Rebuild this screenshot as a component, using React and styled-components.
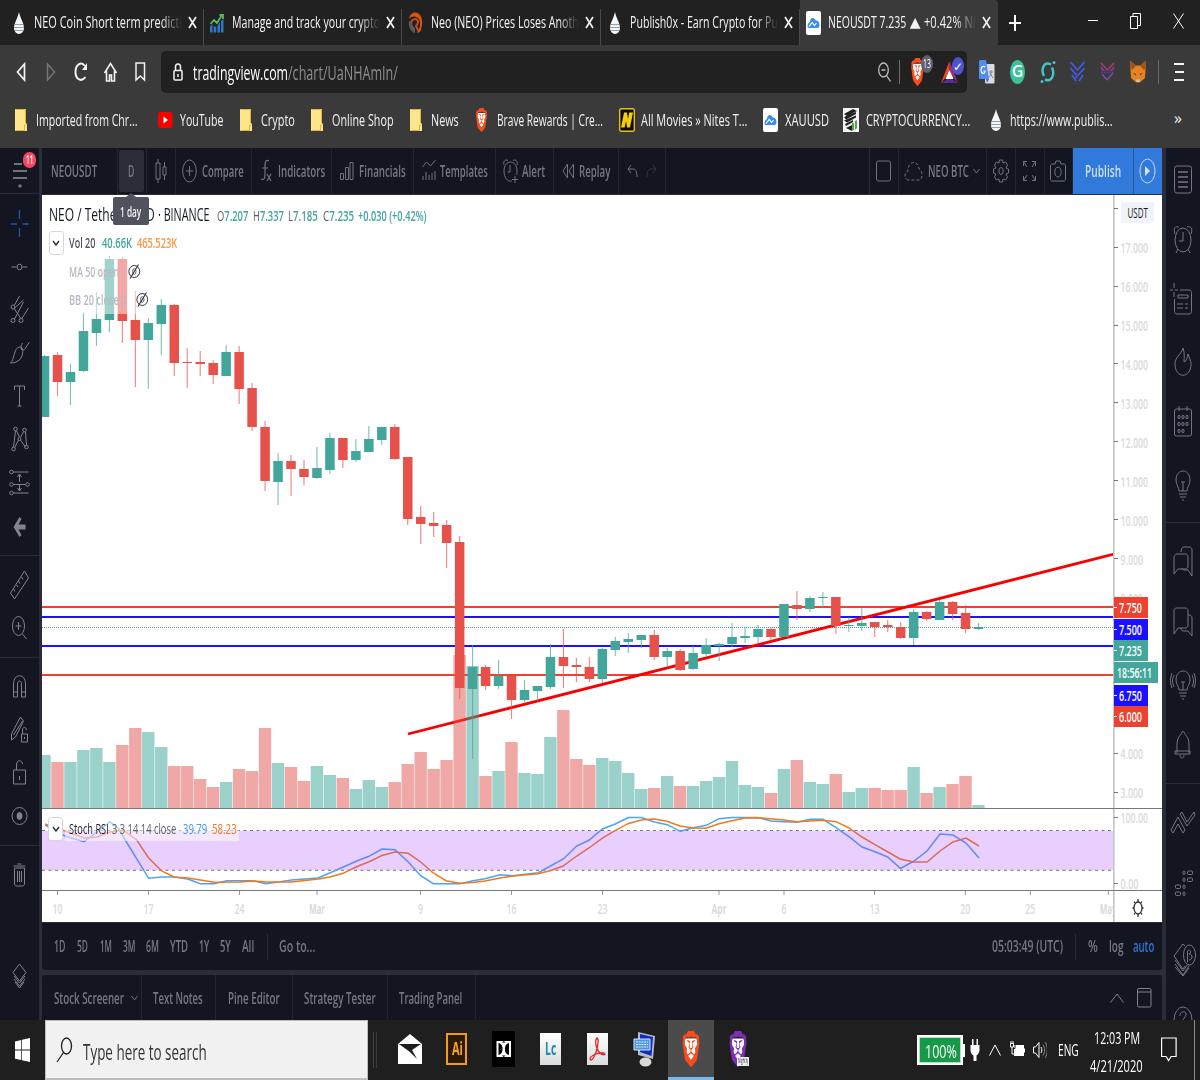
import React, { useLayoutEffect, useRef, useState } from "react";
import styled, { createGlobalStyle, css } from "styled-components";
import { SiBrave } from "react-icons/si";

const UP = "#42a69a";
const DOWN = "#e7514b";

// Text squeezed horizontally into an exact width
const Fit = ({ width, children, ...rest }) => {
  const ref = useRef(null);
  const [scale, setScale] = useState(1);

  useLayoutEffect(() => {
    setScale(width / ref.current.offsetWidth);
  }, [width, children]);

  return (
    <FitBox $width={width} {...rest}>
      <span ref={ref} style={{ transform: `scaleX(${scale})` }}>
        {children}
      </span>
    </FitBox>
  );
};

/* ---------- small icons ---------- */

const DropIcon = () => (
  <Svg width="12" height="24" viewBox="0 0 12 24">
    <path d="M6 1C7.5 8 11 12 11 17a5 6 0 0 1-10 0C1 12 4.500 8 6 1z" fill="#f4f6f8" />
    <path d="M2 13.500h8M1 16.500h10M1.500 19.500h9" stroke="#8fa0ad" strokeWidth="1" />
  </Svg>
);

const CloudIcon = ({ width = 15, height = 24 }) => (
  <Svg width={width} height={height} viewBox="0 0 15 24" preserveAspectRatio="none">
    <rect width="15" height="24" rx="2" fill="#fff" />
    <path d="M1.500 15.500C1.500 12 3.500 12 4 10.500 4.500 6 8.500 6 9.800 9.500c2.500 0 3.700 2 3.700 4.500 0 2-1 3-2 3H3.500c-1 0-2-.5-2-1.500z" fill="#3a8df0" />
    <path d="M3 15.500l3.200-4 2.300 3L10.500 12" stroke="#fff" strokeWidth="1.200" fill="none" />
  </Svg>
);

const BraveIcon = ({ width, height, color = "#fb4b1c" }) => (
  <BraveWrap $w={width} $h={height}>
    <Svg width={width} height={height} viewBox="0 0 24 24" preserveAspectRatio="none">
      <path d="M5 5h14l1 6-3 8-5 4-5-4-3-8z" fill="#fff" />
    </Svg>
    <SiBrave color={color} width={width} height={height} preserveAspectRatio="none" />
  </BraveWrap>
);

const FolderIcon = () => (
  <Svg width="12" height="22" viewBox="0 0 12 22">
    <path d="M0 0h11v14l1 1v7H0z" fill="#fce58b" />
    <path d="M.5 21.500h9v-5.500h2M.5.5h10V14" stroke="#dcb63c" fill="none" />
  </Svg>
);

const YouTubeIcon = () => (
  <Svg width="15" height="18" viewBox="0 0 15 18">
    <rect y="1" width="14.500" height="16" rx="2.500" fill="#f60000" />
    <path d="M5.500 5.500l4.500 3.500-4.500 3.500z" fill="#fff" />
  </Svg>
);

const ChartUpIcon = () => (
  <Svg width="14" height="20" viewBox="0 0 14 20">
    <path d="M0 19.500v-6l2.500-2.500v8.500zM3.700 19.500V13l2.500 1v5.500zM7.400 19.500V13L10 9v10.500zM11 19.500V8l2.500-2v13.500z" fill="#2e79c4" />
    <path d="M.5 11l3.500-4 3 3 5-8M9.500 2h3.500v4" stroke="#59b963" strokeWidth="1.800" fill="none" />
  </Svg>
);

const SwirlIcon = () => (
  <Svg width="15" height="24" viewBox="0 0 15 24">
    <path d="M1 8C2 2 7 0 11 3c4 3 4 12 1 18l-3 1c4-5 4-13 1-15C7 4.500 3 5 1 8z" fill="#dd5311" />
    <path d="M3 12c1-5 7-5 7-1 0 2-1 3-2 4l3 6" stroke="#c94d16" strokeWidth="2" fill="none" />
    <path d="M1 10c-1 6 2 11 6 12V17c-2-1-3-3-3-6z" fill="#5a5a5a" />
  </Svg>
);

const MoviesIcon = () => (
  <Svg width="16" height="24" viewBox="0 0 16 24">
    <rect x=".7" y=".7" width="14.600" height="22.600" rx="1.500" fill="#0c0a00" stroke="#e7c30c" strokeWidth="1.400" />
    <path d="M2 19.500L5 4.500h3l1 6.500 1.200-6.500H14L11 19.500H8L7 13l-1.300 6.500z" fill="#f3ce0f" />
  </Svg>
);

const PagesIcon = () => (
  <Svg width="16" height="24" viewBox="0 0 16 24">
    <rect width="16" height="24" fill="#f4f4f4" />
    <path d="M1 6l9-5 4 2-10 5zM1 9l12-5v2L3 11.500zM1 12.500l12-5v2L4 14.500zM2 16l8-4v2l-7 4z" fill="#202020" />
    <path d="M9 15v8l2-1v-7zM12 13v9l2-2v-8z" fill="#4ca83d" />
    <path d="M3 20l6-3v6z" fill="#202020" />
  </Svg>
);

const CloseIcon = () => (
  <Svg width="9" height="13" viewBox="0 0 9 13">
    <path d="M1 1l7 11M8 1L1 12" stroke="#f2f2f2" strokeWidth="1.700" />
  </Svg>
);

const EyeOffIcon = () => (
  <Svg width="13" height="17" viewBox="0 0 13 17" stroke="#2f3241" fill="none">
    <ellipse cx="6.300" cy="8.500" rx="5.400" ry="6" />
    <ellipse cx="6.300" cy="8.500" rx="1.700" ry="2.800" strokeWidth=".8" />
    <path d="M10.500 1.500L2 15.500" strokeWidth="1.100" />
  </Svg>
);

/* ---------- browser ---------- */

const tabs = [
  { icon: <DropIcon />, text: "NEO Coin Short term predicti" },
  { icon: <ChartUpIcon />, text: "Manage and track your crypto" },
  { icon: <SwirlIcon />, text: "Neo (NEO) Prices Loses Anoth" },
  { icon: <DropIcon />, text: "Publish0x - Earn Crypto for Pu" },
  { icon: <CloudIcon />, text: "NEOUSDT 7.235", change: "+0.42% NE", active: true },
];

const bookmarks = [
  { icon: <FolderIcon />, left: 15, box: 20.5, width: 101.5, text: "Imported from Chr..." },
  { icon: <YouTubeIcon />, left: 21, box: 22, width: 43.5, text: "YouTube" },
  { icon: <FolderIcon />, left: 16.5, box: 20.5, width: 34, text: "Crypto" },
  { icon: <FolderIcon />, left: 16.5, box: 20.5, width: 61.5, text: "Online Shop" },
  { icon: <FolderIcon />, left: 17, box: 21, width: 28, text: "News" },
  { icon: <BraveIcon width={13} height={24} />, left: 16, box: 21.5, width: 106, text: "Brave Rewards | Cre..." },
  { icon: <MoviesIcon />, left: 16, box: 22.5, width: 106.5, text: "All Movies » Nites T..." },
  { icon: <CloudIcon />, left: 15.5, box: 22, width: 44, text: "XAUUSD" },
  { icon: <PagesIcon />, left: 14, box: 23, width: 104, text: "CRYPTOCURRENCY..." },
  { icon: <DropIcon />, left: 19.5, box: 20.5, width: 102.5, text: "https://www.publis..." },
];

const Browser = () => (
  <>
    <TabStrip>
      {tabs.map((tab, i) => (
        <Tab key={i} $active={tab.active}>
          <TabIcon>{tab.icon}</TabIcon>
          <TabText>
            {tab.change ? (
              <>
                <Fit width={78.500}>{tab.text}</Fit>
                <Triangle>▲</Triangle>
                <Fit width={55}>{tab.change}</Fit>
              </>
            ) : (
              <Fit width={148}>{tab.text}</Fit>
            )}
          </TabText>
          <CloseIcon />
        </Tab>
      ))}
      <Cell $w={34}>
        <Svg width="12" height="18" viewBox="0 0 12 18">
          <path d="M6 1v16M0 9h12" stroke="#fff" strokeWidth="2" />
        </Svg>
      </Cell>
      <WindowButtons>
        <Svg width="10" height="16" viewBox="0 0 10 16">
          <path d="M0 7.500h10" stroke="#fff" />
        </Svg>
        <Svg width="11" height="16" viewBox="0 0 11 16" fill="none" stroke="#fff">
          <path d="M.5 3.500h7v12h-7zM3 3V.5h7.500v12H8" />
        </Svg>
        <Svg width="11" height="16" viewBox="0 0 11 16">
          <path d="M.5.5l10 15M10.500.5l-10 15" stroke="#fff" />
        </Svg>
      </WindowButtons>
    </TabStrip>
    <NavRow>
      <Cell $w={29}>
        <Svg width="10" height="20" viewBox="0 0 10 20">
          <path d="M8.500 2v16L1.500 10z" stroke="#f2f2f2" strokeWidth="1.700" fill="none" />
        </Svg>
      </Cell>
      <Cell $w={31}>
        <Svg width="10" height="20" viewBox="0 0 10 20">
          <path d="M1.500 2v16l7-8z" stroke="#757575" strokeWidth="1.500" fill="none" />
        </Svg>
      </Cell>
      <Cell $w={29}>
        <Svg width="14" height="20" viewBox="0 0 14 20" fill="none">
          <path d="M11 4C7-1 1.500 2.500 1.500 10s6 10.500 10 5" stroke="#f2f2f2" strokeWidth="2" />
          <path d="M13 1v7H8z" fill="#f2f2f2" />
        </Svg>
      </Cell>
      <Cell $w={30}>
        <Svg width="13" height="20" viewBox="0 0 13 20" fill="none" stroke="#f2f2f2" strokeWidth="1.600">
          <path d="M.5 11l6-9.500 6 9.500M2.500 9v10h3v-6h2v6h3V9" />
        </Svg>
      </Cell>
      <Cell $w={30}>
        <Svg width="11" height="20" viewBox="0 0 11 20" fill="none" stroke="#f2f2f2" strokeWidth="1.500">
          <path d="M1 1h8.500v17l-4.200-4L1 18z" />
        </Svg>
      </Cell>
      <UrlBar>
        <Svg width="10" height="18" viewBox="0 0 10 18" fill="none" stroke="#f2f2f2" strokeWidth="1.500">
          <rect x="1" y="7.500" width="8" height="9.500" rx="1" />
          <path d="M2.500 7V4c0-4 5-4 5 0v3M5 11v3" />
        </Svg>
        <Url>
          <Fit width={95}>tradingview.com</Fit>
          <Fit width={110} $color="#8e8e8e">
            /chart/UaNHAmIn/
          </Fit>
        </Url>
        <Svg width="13" height="20" viewBox="0 0 13 20" fill="none" stroke="#bcbcbc" strokeWidth="1.300">
          <ellipse cx="5.500" cy="8" rx="4.800" ry="7" />
          <path d="M3.500 8h4M8.500 13.500l4 6" />
        </Svg>
        <UrlDivider $left={8} />
        <Shield $left={10}>
          <BraveIcon width={15} height={28} />
          <CountBadge $bg="#5f6170">
            <Fit width={8}>13</Fit>
          </CountBadge>
        </Shield>
        <Shield $left={14.500}>
          <Svg width="17" height="24" viewBox="0 0 17 24">
            <path d="M8.500 1L0 23l8.500-10z" fill="#ee4a25" />
            <path d="M8.500 1L17 23 8.500 13z" fill="#992f78" />
            <path d="M0 23h17l-8.500-5z" fill="#5c2c96" />
            <path d="M8.500 10l4 9h-8z" fill="#fff" />
          </Svg>
          <CountBadge $bg="#4c54d2">✓</CountBadge>
        </Shield>
      </UrlBar>
      <Cell $w={31}>
        <Svg width="16" height="24" viewBox="0 0 16 24">
          <rect x="6" y="4" width="9.500" height="19.500" rx="1" fill="#dcdcdc" />
          <path d="M10 12h4M12 10v2c0 3-1 5-3 6M11 13l3 5" stroke="#7688a3" fill="none" />
          <path d="M1 0h6l3 19H1a1 1 0 0 1-1-1V1z" fill="#4e8bf5" />
          <path d="M7 19h3l-2 4z" fill="#3367d6" />
          <path d="M6 7C4.500 5.500 2 6.500 2 10s3.500 5 4.200 1H4.300" stroke="#fff" strokeWidth="1.200" fill="none" />
        </Svg>
      </Cell>
      <Cell $w={30}>
        <Grammarly>G</Grammarly>
      </Cell>
      <Cell $w={30}>
        <Svg width="16" height="24" viewBox="0 0 16 24" fill="none" stroke="#45c3c8" strokeWidth="2.500">
          <path d="M11 4.500C4 1 .5 9 4 16M5 19.500c7 3 10-5 7-12" />
          <circle cx="14" cy="2.500" r="1.500" fill="#45c3c8" stroke="none" />
          <circle cx="2" cy="21.500" r="1.500" fill="#45c3c8" stroke="none" />
        </Svg>
      </Cell>
      <Cell $w={30}>
        <Svg width="15" height="22" viewBox="0 0 15 22" fill="none" stroke="#3f5de8" strokeWidth="1.800">
          <path d="M.5 1l7 8 7-8M.5 7l6 7M14.500 7l-9 10M2 14l4 6M13 14l-4 6" />
        </Svg>
      </Cell>
      <Cell $w={30}>
        <Svg width="15" height="20" viewBox="0 0 15 20" fill="none" strokeWidth="1.500">
          <path d="M1 1l6.500 7L14 1" stroke="#a8397a" />
          <path d="M1 5l3 4M14 5l-3 4" stroke="#a8397a" />
          <path d="M1 8.500h13M1 10.500h13" stroke="#54407a" strokeDasharray="2 .6" />
          <path d="M2 12l5 6M13 11l-6 7" stroke="#7d4bb0" />
        </Svg>
      </Cell>
      <Cell $w={30}>
        <Svg width="16" height="24" viewBox="0 0 16 24">
          <path d="M.5 1l5 4.500h5l5-4.500v9L15 18l-4 3.500-1.500 1h-3l-1.500-1L1 18 .5 10z" fill="#e8821e" />
          <path d="M.5 1L6 6 2 10 .5 8zM15.500 1L10 6l4 4 1.500-2z" fill="#a2561f" />
          <path d="M3 13l3 1v1.500zM13 13l-3 1v1.500z" fill="#233447" />
          <path d="M6 19.500h4l-.5 2.500h-3z" fill="#d5c4b3" />
        </Svg>
      </Cell>
      <Cell $w={11}>
        <UrlDivider />
      </Cell>
      <Cell $w={31}>
        <Svg width="10" height="20" viewBox="0 0 10 20">
          <path d="M0 2h10M1 10h9M0 18h10" stroke="#f4f4f4" strokeWidth="2" />
        </Svg>
      </Cell>
    </NavRow>
    <BookmarkRow>
      {bookmarks.map((b) => (
        <Bookmark key={b.text} $left={b.left}>
          <BookmarkIcon $w={b.box}>{b.icon}</BookmarkIcon>
          <Fit width={b.width}>{b.text}</Fit>
        </Bookmark>
      ))}
      <More>»</More>
    </BookmarkRow>
  </>
);

/* ---------- drawing tools (left) ---------- */

const Tool = ({ h = 43.25, children, ...rest }) => (
  <ToolCell $h={h}>
    <Svg width="38" height="36" viewBox="-19.5 -18 38 36" fill="none" stroke="#81848f" {...rest}>
      {children}
    </Svg>
  </ToolCell>
);

const LeftBar = () => (
  <LeftColumn>
    <MenuCell>
      <Svg width="16" height="30" viewBox="0 0 16 30">
        <path d="M1 5h8M0 12h14M0 19h14" stroke="#70737e" strokeWidth="2.200" />
        <circle cx="7" cy="27" r="1.800" fill="#70737e" />
      </Svg>
      <Alerts>
        <Fit width={7.500}>11</Fit>
      </Alerts>
    </MenuCell>
    <ToolGroup>
      <Tool stroke="#2058a5" strokeWidth="1.300">
        <path d="M0-13v9M0 5v9M-8.500 1h6M3 1h6" />
      </Tool>
      <Tool>
        <path d="M-8 1h5M3 1h5" />
        <ellipse cy="1" rx="2.500" ry="2.800" />
      </Tool>
      <Tool>
        <path d="M-5-5L0-14M-6-1L4-10M-5 9L4-8M2 9l7-11M-5-1l6 9" />
        <circle cx="-6.500" cy="-3" r="2" />
        <circle cx="-6.500" cy="10.500" r="2" />
        <circle cx="1.500" cy="10.500" r="2" />
      </Tool>
      <Tool>
        <path d="M-9 10C-5 7-6-5 0-6c4 0 4 5 2 10-2 4-6 6-11 6zM2-3c-1-4 0-5 1-7M2-5c1 3 3 2 4 0l4-6" />
      </Tool>
      <Tool>
        <path d="M-5-6v-4H5v4M0-10V10M-2 10h4" />
      </Tool>
      <Tool>
        <path d="M-4-8l-2 16M-3-8L0-2M-5 9L-1 1M1-2l3-5M1 1l5 7M6-7l1 13" />
        <circle cx="-4" cy="-10" r="1.800" />
        <circle cx="5" cy="-9" r="1.800" />
        <circle cx="0" cy="0" r="1.500" />
        <circle cx="-6" cy="10" r="1.800" />
        <circle cx="7" cy="8" r="1.800" />
      </Tool>
      <Tool>
        <path d="M-6-11H9M-6 1.500H6M-6 10H9M0-8v7M0 2v6M-2-6l2-3 2 3M-2 5l2 3 2-3" />
        <circle cx="-8" cy="-11" r="1.800" />
        <circle cx="-8" cy="1.500" r="1.800" />
        <circle cx="8" cy="1.500" r="1.800" />
        <circle cx="-8" cy="10" r="1.800" />
      </Tool>
      <Tool stroke="none" fill="#81848f">
        <path d="M-6 1L0-9 2-7-1-1.500h7v5h-7L2 9 0 11z" />
      </Tool>
    </ToolGroup>
    <ToolGroup>
      <Tool>
        <path d="M-9 8L5-14l4 7-14 21zM2-8l1.500 2.500M-1-4l1.500 2.500M-3 0l1.500 2M-6 4l1.500 2.500" />
      </Tool>
      <Tool>
        <ellipse cx="-1" cy="-2" rx="6" ry="9.500" />
        <path d="M-4-2h6M-1-6v8M3 6l4 5" />
      </Tool>
    </ToolGroup>
    <ToolGroup>
      <Tool>
        <path d="M-6 10V-3c0-11 12-11 12 0v13H2V-3c0-4-4-4-4 0v13zM-6 5h4M2 5h4" />
      </Tool>
      <Tool>
        <path d="M-8 4l9-17 3 4-8 16-4 3zM-6 5L3-9M2 4h6v8H2zM3 4V0c0-4 4-3 4 0M5 7v2" />
      </Tool>
      <Tool>
        <path d="M-6-3H6v14H-6zM-3-3v-5c0-6 6-5 6-1M0 3v4" />
      </Tool>
      <Tool>
        <ellipse rx="7.500" ry="8.500" />
        <ellipse rx="2.500" ry="3.500" fill="#81848f" />
      </Tool>
    </ToolGroup>
    <ToolGroup $last>
      <Tool>
        <path d="M-5-7H5V9c0 1-1 2-2 2h-6c-1 0-2-1-2-2zM-6-9H6M-2-11h4M-2-4V7M0-4V7M2-4V7" />
      </Tool>
    </ToolGroup>
    <LayersCell>
      <Svg width="16" height="26" viewBox="0 0 16 26" fill="none" stroke="#81848f">
        <path d="M7.500 1L14 9.500 7.500 18 1 9.500zM2 13l5.500 7L13 13M2 16l5.500 7L13 16M3 19l4.500 6 4.500-6" />
      </Svg>
    </LayersCell>
  </LeftColumn>
);

/* ---------- widget bar (right) ---------- */

const Widget = ({ children }) => (
  <WidgetCell>
    <Svg width="34" height="36" viewBox="-17 -18 34 36" fill="none" stroke="#747783">
      {children}
    </Svg>
  </WidgetCell>
);

const RightBar = () => (
  <RightColumn>
    <WidgetGroup>
      <Widget>
        <rect x="-8.500" y="-13" width="17" height="27" rx="2.500" />
        <path d="M-5-7H5M-5-2H5M-5 3H5M-5 8H5" strokeWidth="1.300" />
      </Widget>
      <Widget>
        <ellipse cy="0" rx="8" ry="12" />
        <path d="M0-8v9h-4M-8-6c-2-6 0-8 4-7M8-6c2-6 0-8-4-7M-5 9l-2 4M5 9l2 4" />
      </Widget>
      <Widget>
        <path d="M-3-11h9c1.500 0 2.500 1 2.500 2.500v19c0 1.500-1 2.500-2.500 2.500H-6c-1.500 0-2.500-1-2.500-2.500V-2M-9-18v5M-9-9v5M-13-11h3M-8-11h3" />
        <path d="M-5-6H5v3H-5zM-6 3H0M2 3h3M-6 7H0M2 7h3" />
      </Widget>
      <Widget>
        <path d="M0-14c-2 7-8 9-8 16C-8 17 8 17 8 2 8-2 6-4 5-8 4-4 4-1 1 0 1-5 2-8 0-14z" />
      </Widget>
      <Widget>
        <rect x="-8.500" y="-14" width="17" height="27" rx="2" />
        <path d="M-4-17v5M4-17v5" />
        {[-4, 0, 4].map((x) =>
          [-6, 1, 8].map((y) =>
            x === 4 && y === 8 ? null : <ellipse key={`${x}/${y}`} cx={x} cy={y} rx="1.100" ry="1.800" />
          )
        )}
      </Widget>
      <Widget>
        <path d="M-4 7C-4 3-7 1-7-4c0-12 14-12 14 0 0 5-3 7-3 11zM-4 10h8M-3 13h6M-1 16h2M0 7v-9M-2-2h4" />
      </Widget>
    </WidgetGroup>
    <WidgetGroup>
      <Widget>
        <path d="M-9 12V-4c0-2 1-4 3-4H2c2 0 3 1 3 3V4c0 2-1 3-3 3h-7zM-2-10c0-3 1-5 3-5h5c2 0 3 1 3 3v26l-4-6H2c-2 0-3-1-3-2" />
      </Widget>
      <Widget>
        <path d="M-9 11V-12c0-2 1-3 3-3H2c2 0 3 1 3 3V2c0 2-1 3-3 3h-7zM5-8h1c2 0 3 1 3 3v18l-4-5H1c-2 0-3-1-3-3" />
      </Widget>
      <Widget>
        <path d="M-4 6C-4 2-7 1-7-4c0-12 14-12 14 0 0 5-3 6-3 10zM-4 9h8M-3 12h6M-1 15h2M0 6v-8M-2-2h4M-9-9c-2 5-2 7 0 12M9-9c2 5 2 7 0 12M-11-11c-2 6-2 9 0 15M11-11c2 6 2 9 0 15" />
      </Widget>
      <Widget>
        <path d="M-6 8V0c0-9 4-9 5-13C0-14 0-14 1-13c1 4 5 4 5 13v8M-8 6H7v3H-8zM-3 10c0 4 4 4 4 0" />
      </Widget>
    </WidgetGroup>
    <WidgetGroup $last>
      <Widget>
        <path d="M-12 7L-5-6 2 7 0 10-5 1l-5 9zM-3-9l2-2L4-1 11-11l1 3L4 3z" />
      </Widget>
      <Widget>
        {[
          [1, -11],
          [7, -11],
          [1, -4],
          [7, -4],
          [-5, 3],
          [1, 3],
          [-5, 10],
          [1, 10],
        ].map(([x, y]) => (
          <rect
            key={`${x}/${y}`}
            x={x === 1 ? x - 1 : x - 2.5}
            y={y - 2}
            width={x === 1 ? 2 : 5}
            height="3.500"
            rx="1"
          />
        ))}
      </Widget>
      <BetaSpace />
      <Widget>
        <path d="M2-13l-2-2-9 12L0 10l2-3M-8 1l8 11 5-7M-8 5l8 11 6-9M-8 8l8 9 6-8" />
        <ellipse cx="6.500" cy="-4" rx="6" ry="10" />
        <path d="M4.500 3V-7c0-3 4-2 3 1L6-5c4 0 4 6 0 6" />
      </Widget>
      <Widget>
        <ellipse rx="9" ry="13" />
        <path d="M-3-4c0-6 7-5 6-1-1 3-3 3-3 6" />
      </Widget>
    </WidgetGroup>
  </RightColumn>
);

/* ---------- chart ---------- */

// direction, high, body top, body bottom, low, volume top
const candles = [
  ["g", 355, 356, 417, 417, 755],
  ["r", 352, 355, 382, 396, 762],
  ["g", 364, 372, 382, 405, 762],
  ["g", 312, 331, 371, 372, 750],
  ["g", 292, 319, 333, 346, 748],
  ["g", 256, 259, 320, 332, 762],
  ["r", 257, 259, 321, 343, 745],
  ["r", 291, 320, 340, 387, 728],
  ["g", 318, 323, 340, 389, 732],
  ["g", 299, 305, 324, 355, 747],
  ["r", 304, 305, 363, 376, 766],
  ["r", 348, 362, 363, 388, 766],
  ["r", 351, 362, 364, 376, 779],
  ["r", 360, 363, 375, 384, 787],
  ["g", 345, 352, 376, 376, 782],
  ["r", 346, 352, 389, 404, 769],
  ["r", 383, 388, 427, 431, 771],
  ["r", 421, 427, 481, 491, 728],
  ["g", 453, 461, 482, 505, 763],
  ["r", 455, 461, 469, 496, 767],
  ["r", 460, 469, 477, 485, 781],
  ["g", 447, 468, 478, 479, 766],
  ["g", 433, 438, 470, 474, 775],
  ["r", 438, 438, 460, 468, 778],
  ["g", 439, 451, 460, 462, 789],
  ["g", 426, 439, 452, 452, 780],
  ["g", 427, 427, 440, 445, 787],
  ["r", 424, 427, 459, 460, 782],
  ["r", 457, 457, 519, 525, 764],
  ["r", 506, 517, 524, 544, 752],
  ["r", 512, 523, 526, 537, 769],
  ["r", 520, 525, 543, 568, 760],
  ["r", 536, 542, 688, 699, 655],
  ["g", 645, 667, 689, 759, 666],
  ["r", 665, 667, 686, 690, 776],
  ["g", 660, 676, 686, 689, 771],
  ["r", 676, 676, 700, 719, 742],
  ["g", 680, 690, 700, 702, 773],
  ["g", 686, 686, 691, 701, 774],
  ["g", 644, 657, 687, 689, 737],
  ["r", 629, 657, 666, 688, 710],
  ["r", 658, 665, 667, 682, 759],
  ["r", 657, 667, 679, 682, 765],
  ["g", 648, 649, 679, 683, 758],
  ["g", 637, 641, 650, 656, 761],
  ["g", 633, 639, 642, 653, 773],
  ["g", 635, 635, 640, 648, 789],
  ["r", 630, 635, 657, 660, 788],
  ["g", 648, 651, 657, 667, 776],
  ["r", 649, 651, 670, 671, 786],
  ["g", 646, 653, 669, 670, 786],
  ["g", 638, 645, 654, 656, 781],
  ["g", 643, 644, 646, 661, 777],
  ["g", 623, 637, 644, 647, 761],
  ["g", 627, 636, 638, 643, 785],
  ["g", 625, 629, 637, 643, 787],
  ["r", 627, 629, 637, 640, 793],
  ["g", 604, 604, 637, 637, 769],
  ["r", 591, 605, 609, 620, 760],
  ["g", 596, 598, 609, 612, 782],
  ["g", 592, 597, 598, 607, 784],
  ["r", 597, 597, 626, 634, 774],
  ["g", 617, 625, 626, 632, 792],
  ["g", 608, 623, 626, 631, 788],
  ["r", 622, 622, 627, 637, 788],
  ["r", 620, 625, 627, 632, 790],
  ["r", 622, 627, 638, 639, 790],
  ["g", 609, 612, 638, 645, 767],
  ["r", 611, 612, 619, 621, 793],
  ["g", 600, 602, 620, 620, 787],
  ["r", 601, 602, 614, 620, 784],
  ["r", 605, 613, 629, 633, 776],
  ["g", 623, 627, 629, 630, 805],
];

const stochK =
  "45,825 65,836 84,841.7 97,832 110,822 119,829 124,838 148.7,878.3 161.7,877 174,877 187.7,879 200.4,883.7 214,883.7 226.7,880.7 253,880.7 265.7,883.7 278.5,882 291.7,880 318,878 336.7,870 356.7,861 369,856.3 382,849 395,849.7 408.3,862 420.7,875.7 433.3,883.7 460,883.7 473,880.7 485,878.7 500,874.7 513,875.7 538.3,872.7 563.3,859 576.7,846 589.3,840 602.3,829 615.3,824 628.3,817.6 641.7,817.6 654.3,822 667.3,824.7 680.3,831.3 693.3,827.7 706.3,825.3 719,818.7 732,817.6 758,817.6 771,821 784,821.7 797,822.3 810,819.3 823,819.3 836,827.7 849,836.7 862,847 875,851.7 887.7,857 900.5,868.5 914,861 927,851 940,834 953,835 966,843 979,858";
const stochD =
  "45,824 65,831 84,838 97,837 110,832 123,830 136.7,840 148.7,858 161.7,871 174,877 187.7,878 200.4,880 214,882.3 240,882 253,881 266,882 291.7,882 305,880.5 318,879 330,877 343,873.3 356,867 369,861.7 382,855.5 395,852 408.3,853.3 420.7,862 433.3,873 446,880.7 460,883.3 473,882.5 485,881 500,878 513,876 538,873.7 551,870.5 563,866 576.7,856 589,848 602,838.3 615,830.7 628,823.7 641,820 654,819 667,821.3 680,826 693,828 706,828.3 719,823.7 732,820.7 745,818 758,817.7 784,820 797,821.7 823,820.3 836,821.7 849,828 862,837 875,844.7 888,852 900,859 914,862 927,862 940,851 953,842 966,838 979,846";

const timeLabels = [
  [57.5, "10", 10],
  [148.5, "17", 10],
  [239.5, "24", 10],
  [317, "Mar", 16],
  [420.5, "9", 5],
  [511.5, "16", 10],
  [602.5, "23", 10],
  [719, "Apr", 15],
  [784, "6", 5],
  [874.5, "13", 10],
  [965.3, "20", 10],
  [1030.3, "25", 10],
  [1108.3, "May", 17],
];

const priceTags = [
  [597, "7.750", "#ee4130"],
  [619, "7.500", "#1b10ff"],
  [640, "7.235", UP],
  [685, "6.750", "#1b10ff"],
  [706, "6.000", "#ee4130"],
];

// levels 5 to 7 sit under the price tags
const priceLevels = [18, 17, 16, 15, 14, 13, 12, 11, 10, 9, 8, 4, 3];

const candleX = (i) => 44.5 + i * 12.972;

const AxisText = ({ x, y, w, children, ...rest }) => (
  <text x={x} y={y} textLength={w} lengthAdjust="spacingAndGlyphs" fill="#dadadc" {...rest}>
    {children}
  </text>
);

const Chart = () => (
  <ChartSvg width="1120" height="727" viewBox="42 195 1120 727">
    <defs>
      <clipPath id="pane">
        <rect x="42" y="195" width="1072" height="727" />
      </clipPath>
    </defs>
    <g clipPath="url(#pane)">
      {[
        [607, "#ee4130"],
        [617, "#1b10ff"],
        [646, "#1b10ff"],
        [675, "#ee4130"],
      ].map(([y, color]) => (
        <rect key={y} x="42" y={y - 1} width="1072" height="2" fill={color} />
      ))}
      <path d="M42 627.500H1114" stroke="#4a968e" strokeDasharray="1 1" />
      <path d="M408 734L1114 554" stroke="#f90000" strokeWidth="2.800" />
      {candles.map(([dir, , , , , top], i) => (
        <rect
          key={i}
          x={candleX(i) - 6.2}
          y={top}
          width="12.400"
          height={808 - top}
          fill={dir === "g" ? "#35a597" : "#e1524d"}
          opacity="0.5"
        />
      ))}
      {candles.map(([dir, high, top, bottom, low], i) => {
        const x = candleX(i);
        const color = dir === "g" ? UP : DOWN;
        return (
          <g key={i} fill={color}>
            <rect x={x - 0.5} y={high} width="1.100" height={low - high} opacity="0.7" />
            <rect x={x - 4.7} y={top} width="9.500" height={bottom - top} />
          </g>
        );
      })}
      <path d="M42 830.500H1114M42 870.300H1114" stroke="#77707f" strokeDasharray="3 3.500" />
      <polyline points={stochK} fill="none" stroke="#4aa3f7" strokeWidth="1.500" />
      <polyline points={stochD} fill="none" stroke="#f07a1c" strokeWidth="1.500" />
      <rect x="42" y="831" width="1072" height="39" fill="#a33ff7" opacity="0.25" />
      {timeLabels.map(([x, label, w]) => (
        <AxisText
          key={label}
          x={x - w / 2}
          y="914"
          w={w}
          fontWeight={label.length > 2 ? 700 : 600}
        >
          {label}
        </AxisText>
      ))}
    </g>
    <rect x="1113" y="195" width="1.600" height="727" fill="#c4c4c4" />
    <path d="M42 808.500H1162M42 890.500H1162" stroke="#777" />
    {timeLabels.map(([x, label]) => (
      <path key={label} d={`M${x} 891v4`} stroke="#999" />
    ))}
    {priceLevels.map((price) => {
      const y = 208.6 + (18 - price) * 38.97;
      return (
        <g key={price}>
          <path d={`M1114 ${Math.round(y) - 0.5}h4`} stroke="#777" />
          {price < 18 && (
            <AxisText x="1120.500" y={y + 5.3} w={price > 9 ? 27.500 : 22.500}>
              {`${price}.000`}
            </AxisText>
          )}
        </g>
      );
    })}
    <path d="M1114 817.500h4M1114 883.500h4" stroke="#777" />
    <AxisText x="1120.500" y="823" w={27.500}>
      100.00
    </AxisText>
    <AxisText x="1120.500" y="889" w={18}>
      0.00
    </AxisText>
    {priceTags.map(([y, label, color]) => (
      <g key={label}>
        <rect x="1114" y={y} width="34" height="21" fill={color} />
        <path d={`M1114 ${y + 10.5}h3`} stroke="#fff" />
        <AxisText x="1119" y={y + 16} w={23} fill="#fff">
          {label}
        </AxisText>
      </g>
    ))}
    <rect x="1114" y="662" width="44" height="21" fill={UP} />
    <AxisText x="1117" y="678" w={35} fill="#fff">
      18:56:11
    </AxisText>
    <rect x="1121" y="202" width="33" height="21" rx="2" fill="#f0f3fa" />
    <AxisText x="1127.500" y="218" w={20.500} fill="#131722" fontWeight={400}>
      USDT
    </AxisText>
    <g fill="none" stroke="#2a2e39" strokeWidth="1.300">
      <ellipse cx="1138" cy="908" rx="4" ry="6" />
      <path d="M1138 899v3M1138 914v3M1132.500 908h1.500M1142 908h1.500M1134 901.500l1 1.500M1142 901.500l-1 1.500M1134 914.500l1-1.500M1142 914.500l-1-1.500" />
    </g>
  </ChartSvg>
);

const ChevronBox = () => (
  <Chevron>
    <Svg width="8" height="6" viewBox="0 0 8 6">
      <path d="M1 1l3 4 3-4" stroke="#2a2e39" strokeWidth="1.400" fill="none" />
    </Svg>
  </Chevron>
);

const Legend = () => (
  <LegendBox>
    <LegendTitle>
      <Fit width={106}>NEO / TetherUS · D</Fit>
      <Value $left={3}>
        <Fit width={51.500}>· BINANCE</Fit>
      </Value>
      <Ohlc>
        <Fit width={31}>
          O<b>7.207</b>
        </Fit>
        <Fit width={31}>
          H<b>7.337</b>
        </Fit>
        <Fit width={30}>
          L<b>7.185</b>
        </Fit>
        <Fit width={31}>
          C<b>7.235</b>
        </Fit>
        <Fit width={68.500}>
          <b>+0.030 (+0.42%)</b>
        </Fit>
      </Ohlc>
    </LegendTitle>
    <LegendRow $w={130}>
      <ChevronBox />
      <Fit width={26.500}>Vol 20</Fit>
      <Value $left={6.500} $color={UP}>
        <Fit width={30}>40.66K</Fit>
      </Value>
      <Value $left={4.500} $color="#f8993f">
        <Fit width={40}>465.523K</Fit>
      </Value>
    </LegendRow>
    <LegendRow $hidden $w={103}>
      <Fit width={50}>MA 50 open</Fit>
      <EyeOffIcon />
    </LegendRow>
    <LegendRow $hidden $w={103}>
      <Fit width={57.500}>BB 20 close 2</Fit>
      <EyeOffIcon />
    </LegendRow>
  </LegendBox>
);

const StochLegend = () => (
  <StochBox>
    <ChevronBox />
    <StochText>
      <Value $color="#1d1f29">
        <Fit width={40}>Stoch RSI</Fit>
      </Value>
      <Value $left={3} $color="#5d606b">
        <Fit width={64.500}>3 3 14 14 close</Fit>
      </Value>
      <Value $left={7} $color="#3c9af5">
        <Fit width={24}>39.79</Fit>
      </Value>
      <Value $left={4.500} $color="#f5781c">
        <Fit width={24.500}>58.23</Fit>
      </Value>
    </StochText>
  </StochBox>
);

/* ---------- trading toolbar ---------- */

const TopBar = () => (
  <TopRow>
    <ToolbarCell $w={75.500} $start={9}>
      <Fit width={46.500}>NEOUSDT</Fit>
    </ToolbarCell>
    <ToolbarCell $w={29}>
      <IntervalButton>
        <Fit width={6.500}>D</Fit>
        <Tooltip>
          <Fit width={21.500}>1 day</Fit>
        </Tooltip>
      </IntervalButton>
    </ToolbarCell>
    <ToolbarCell $w={29}>
      <Svg width="12" height="24" viewBox="0 0 12 24" fill="none" stroke="#70737e">
        <path d="M1 4h4v16H1zM3 0v4M3 20v4M8 8h3v8H8zM9.500 3v5M9.500 16v5" />
      </Svg>
    </ToolbarCell>
    <ToolbarCell $w={76} $start={6.500}>
      <Svg width="15" height="24" viewBox="0 0 15 24" fill="none" stroke="#70737e">
        <ellipse cx="7.500" cy="12" rx="6.800" ry="11" />
        <path d="M4 12h7M7.500 7v10" />
      </Svg>
      <Fit width={42}>Compare</Fit>
    </ToolbarCell>
    <ToolbarCell $w={80.500} $start={9.500}>
      <Svg width="12" height="24" viewBox="0 0 12 24" fill="none" stroke="#70737e" strokeWidth="1.200">
        <path d="M8 2C5 0 4 3 4 6v10c0 5-2 5-4 4M1 9h6M6 15l4 7M10 15l-4 7" />
      </Svg>
      <Fit width={47}>Indicators</Fit>
    </ToolbarCell>
    <ToolbarCell $w={81.500} $start={8}>
      <Svg width="14" height="20" viewBox="0 0 14 20" fill="none" stroke="#70737e">
        <path d="M.5 12.500h3v6h-3zM5.500 6.500h3v12h-3zM10 1.500h3v17h-3z" />
      </Svg>
      <Fit width={47}>Financials</Fit>
    </ToolbarCell>
    <ToolbarCell $w={82} $start={8}>
      <Svg width="14" height="22" viewBox="0 0 14 22" fill="none" stroke="#70737e">
        <path d="M.5 7l4-5 4 4 5-6M1 20v-4M4 20v-8M7 20v-5M10 20v-7M13 20v-9" />
      </Svg>
      <Fit width={48}>Templates</Fit>
    </ToolbarCell>
    <ToolbarCell $w={58} $start={7}>
      <Svg width="15" height="25" viewBox="0 0 15 25" fill="none" stroke="#70737e">
        <path d="M9 22C4 23 1 18 1 12 1 0 14 0 14 12c0 2 0 3-.5 4M7 6v7H4.500M1 6C0 2 2 0 5 1.500M14 6c1-4-1-6-4-4.500M12 17v7M9 20.500h6" />
      </Svg>
      <Fit width={23.500}>Alert</Fit>
    </ToolbarCell>
    <ToolbarCell $w={65.500} $start={8.500}>
      <Svg width="12" height="16" viewBox="0 0 12 16" fill="none" stroke="#70737e">
        <path d="M5.500 1v14L1 8zM11.500 1v14L7 8z" />
      </Svg>
      <Fit width={31.500}>Replay</Fit>
    </ToolbarCell>
    <ToolbarCell $w={47}>
      <Svg width="11" height="14" viewBox="0 0 11 14" fill="none" stroke="#70737e">
        <path d="M4 1L1 5l3 4M1 5h5c3 0 4 3 4 8" />
      </Svg>
      <Svg width="11" height="14" viewBox="0 0 11 14" fill="none" stroke="#333643">
        <path d="M7 1l3 4-3 4M10 5H5c-3 0-4 3-4 8" />
      </Svg>
    </ToolbarCell>
    <Spacer $line />
    <ToolbarCell $w={29}>
      <Svg width="15" height="22" viewBox="0 0 15 22" fill="none" stroke="#70737e">
        <rect x=".5" y="1" width="14" height="20" rx="2" />
      </Svg>
    </ToolbarCell>
    <ToolbarCell $w={88}>
      <Svg width="19" height="22" viewBox="0 0 19 22" fill="none" stroke="#70737e">
        <path d="M4 20C0 20 0 12 4 11 4 0 14 0 15 9c4 1 4 11 0 11z" strokeDasharray="3 2" />
      </Svg>
      <Fit width={41}>NEO BTC</Fit>
      <Svg width="7" height="6" viewBox="0 0 7 6">
        <path d="M.5 1l3 4 3-4" stroke="#70737e" fill="none" />
      </Svg>
    </ToolbarCell>
    <ToolbarCell $w={29}>
      <Svg width="16" height="24" viewBox="0 0 16 24" fill="none" stroke="#70737e">
        <path d="M6.500 1h3l.5 3 2.500-1 2 3-1.500 3 2.500 1v4l-2.500 1 1.500 3-2 3-2.500-1-.5 3h-3L6 20l-2.500 1-2-3L3 15 .5 14v-4L3 9 1.500 6l2-3L6 4z" />
        <ellipse cx="8" cy="12" rx="2.200" ry="3.500" />
      </Svg>
    </ToolbarCell>
    <ToolbarCell $w={29}>
      <Svg width="13" height="20" viewBox="0 0 13 20" fill="none" stroke="#70737e">
        <path d="M.5 5V.5H4M.5.5L4 6M12.500 5V.5H9M12.500.5L9 6M.5 15v4.500H4M.5 19.500L4 14M12.500 15v4.500H9M12.500 19.500L9 14" />
      </Svg>
    </ToolbarCell>
    <ToolbarCell $w={28}>
      <Svg width="16" height="22" viewBox="0 0 16 22" fill="none" stroke="#70737e">
        <path d="M2 4h3l1-3h4l1 3h3c1 0 1.500 1 1.500 2v13c0 1-.5 2-1.500 2H2c-1 0-1.500-1-1.500-2V6c0-1 .5-2 1.500-2z" />
        <ellipse cx="8" cy="12" rx="3.200" ry="5" />
      </Svg>
    </ToolbarCell>
    <Publish>
      <Fit width={36}>Publish</Fit>
    </Publish>
    <Play>
      <Svg width="17" height="26" viewBox="0 0 17 26">
        <ellipse cx="8.500" cy="13" rx="7.500" ry="12" fill="none" stroke="#c7dbf5" />
        <path d="M6 8l5 5-5 5z" fill="#d4e3f7" />
      </Svg>
    </Play>
  </TopRow>
);

const ranges = [
  [12, 11.5, "1D"],
  [11, 11, "5D"],
  [12, 12, "1M"],
  [11, 12.5, "3M"],
  [10.5, 13, "6M"],
  [11, 18, "YTD"],
  [11, 10.5, "1Y"],
  [11, 11, "5Y"],
  [11, 12.5, "All"],
];

const RangeBar = () => (
  <RangeRow>
    {ranges.map(([left, width, label]) => (
      <Value key={label} $left={left}>
        <Fit width={width}>{label}</Fit>
      </Value>
    ))}
    <RangeDivider $left={12} />
    <Value $left={11.500}>
      <Fit width={36.500}>Go to...</Fit>
    </Value>
    <Spacer />
    <Fit width={71}>05:03:49 (UTC)</Fit>
    <RangeDivider $left={12} />
    <Value $left={12}>
      <Fit width={10}>%</Fit>
    </Value>
    <Value $left={10.500}>
      <Fit width={14.500}>log</Fit>
    </Value>
    <Value $left={9.500} $right={8} $color="#2f74d8">
      <Fit width={21.500}>auto</Fit>
    </Value>
  </RangeRow>
);

const panels = [
  [99.5, 70, "Stock Screener"],
  [74.5, 50, "Text Notes"],
  [76.5, 52, "Pine Editor"],
  [95, 71.5, "Strategy Tester"],
  [88, 63.5, "Trading Panel"],
];

const PanelBar = () => (
  <PanelRow>
    {panels.map(([w, width, label], i) => (
      <PanelTab key={label} $w={w}>
        <Fit width={width}>{label}</Fit>
        {i === 0 && (
          <Svg width="7" height="6" viewBox="0 0 7 6">
            <path d="M.5 1l3 4 3-4" stroke="#70737e" fill="none" />
          </Svg>
        )}
      </PanelTab>
    ))}
    <Spacer />
    <PanelButtons>
      <Svg width="14" height="10" viewBox="0 0 14 10">
        <path d="M.5 9.500L7 1l6.500 8.500" stroke="#81848f" fill="none" />
      </Svg>
      <Svg width="15" height="20" viewBox="0 0 15 20" fill="none" stroke="#81848f">
        <rect x=".5" y=".5" width="13.500" height="18.500" rx="1.500" />
        <path d="M1 4h13" />
      </Svg>
    </PanelButtons>
  </PanelRow>
);

/* ---------- taskbar ---------- */

const TaskBar = () => (
  <TaskRow>
    <Cell $w={45}>
      <Svg width="15" height="24" viewBox="0 0 15 24" fill="#fff">
        <path d="M0 3.500l6.300-1.500v9.500H0zM7 1.800L15 0v11.500H7zM0 12.500h6.300V22L0 20.700zM7 12.500h8V24l-8-1.800z" />
      </Svg>
    </Cell>
    <SearchBox>
      <Svg width="17" height="26" viewBox="0 0 17 26" fill="none" stroke="#222" strokeWidth="1.300">
        <ellipse cx="10.500" cy="9" rx="5" ry="8" />
        <path d="M7.500 15.500L1 25" />
      </Svg>
      <Fit width={123.500}>Type here to search</Fit>
    </SearchBox>
    <TaskDivider />
    <TaskIcon>
      <Svg width="24" height="30" viewBox="0 0 24 30">
        <path d="M0 10L12 0l12 10v20H0z" fill="#fff" />
        <path d="M1 10h22l-9 6 5 9-7-7z" fill="#1c1c1c" />
      </Svg>
    </TaskIcon>
    <TaskIcon>
      <Illustrator>
        <Fit width={11}>Ai</Fit>
      </Illustrator>
    </TaskIcon>
    <TaskIcon>
      <Svg width="23" height="36" viewBox="0 0 23 36">
        <rect width="23" height="36" fill="#000" />
        <path d="M4.500 10h14.500v16H4.500z" fill="#fff" />
        <path d="M6.500 12c5.500.5 5.500 11.500 0 12zM17 12c-5.500.5-5.500 11.500 0 12z" fill="#000" />
        <path d="M11.750 10l-2 1.500h4zM11.750 26l-2-1.500h4z" fill="#000" />
      </Svg>
    </TaskIcon>
    <TaskIcon>
      <Paper>
        <Fit width={11}>Lc</Fit>
      </Paper>
    </TaskIcon>
    <TaskIcon>
      <Paper>
        <Svg width="17" height="26" viewBox="0 0 17 26" fill="none" stroke="#e0262b" strokeWidth="1.300">
          <path d="M1 23c0-3 8-7 14-6 3 2-2 3-5-1C6 11 6 4 8 2c2 0 1 9-1 14-2 6-5 10-6 7z" />
        </Svg>
      </Paper>
    </TaskIcon>
    <TaskIcon>
      <Svg width="23" height="36" viewBox="0 0 23 36">
        <path d="M5 1l17 4-2 23L5 24z" fill="#b9bcc0" />
        <path d="M7 3l13 3-1.500 19L7 21z" fill="#0c2bc5" />
        <path d="M1 8h16v11H1z" fill="#4e96dd" stroke="#dbe7f4" />
        <path d="M3 11h12M3 13.500h12M3 16h12" stroke="#e8f2fc" strokeDasharray="2 .7" />
        <ellipse cx="12.500" cy="31" rx="6" ry="4.500" fill="#d8d8d8" />
      </Svg>
    </TaskIcon>
    <TaskIcon $active>
      <BraveIcon width={20} height={36} />
    </TaskIcon>
    <TaskIcon>
      <BraveIcon width={20} height={36} color="#7b2fb9" />
      <Nightly>
        <Fit width={10}>Nightly</Fit>
      </Nightly>
    </TaskIcon>
    <Spacer />
    <Battery>
      <Fit width={32}>100%</Fit>
    </Battery>
    <Cell $w={19}>
      <Svg width="10" height="24" viewBox="0 0 10 24" fill="#fff">
        <path d="M2 1h1.500v6h3V1H8v6h1.500v5c0 3-2 5-3 5.500V23h-3v-5.500C2 17 .5 15 .5 12V7H2z" />
      </Svg>
    </Cell>
    <Cell $w={20}>
      <Svg width="12" height="12" viewBox="0 0 12 12">
        <path d="M.5 11.500L6 1l5.500 10.500" stroke="#fff" fill="none" />
      </Svg>
    </Cell>
    <Cell $w={25}>
      <Svg width="15" height="18" viewBox="0 0 15 18">
        <path d="M4 4h10v11H4z" fill="#fff" />
        <path d="M5 3.500v4H3v3" stroke="#1f1f1f" fill="none" />
        <path d="M.5 2.500v3.500h3V2.500zM1 0v3M3 0v3M2 6v7h2M14.500 7.500v4" stroke="#fff" fill="none" />
      </Svg>
    </Cell>
    <Cell $w={21}>
      <Svg width="14" height="18" viewBox="0 0 14 18" fill="none" stroke="#fff">
        <path d="M.5 6v6h2L6 16.500V1.500L2.500 6zM8 6c1 2 1 4 0 6" />
        <path d="M10 3.500c2 3 2 8 0 11M12 1c3 4 3 12 0 16" stroke="#8a8a8a" />
      </Svg>
    </Cell>
    <Lang>
      <Fit width={21}>ENG</Fit>
    </Lang>
    <Clock>
      <Fit width={46}>12:03 PM</Fit>
      <Fit width={53}>4/21/2020</Fit>
    </Clock>
    <Cell $w={35}>
      <Svg width="16" height="26" viewBox="0 0 16 26" fill="none" stroke="#fff" strokeWidth="1.200">
        <path d="M.6 1h14.500v18.500h-5l-2.500 4-2.500-4H.6z" />
      </Svg>
    </Cell>
    <DesktopEdge />
  </TaskRow>
);

const App = () => (
  <>
    <GlobalStyle />
    <Screen>
      <Browser />
      <Workspace>
        <LeftBar />
        <Center>
          <TopBar />
          <ChartArea>
            <Chart />
            <Legend />
            <StochLegend />
          </ChartArea>
          <RangeBar />
          <PanelBar />
        </Center>
        <RightBar />
      </Workspace>
      <TaskBar />
    </Screen>
  </>
);

export default App;

const GlobalStyle = createGlobalStyle`
  * {
    box-sizing: border-box;
  }
  body {
    margin: 0;
    font-family: "Open Sans", "Noto Sans", sans-serif;
    overflow: hidden;
  }
`;

const Screen = styled.div`
  width: 1200px;
  height: 1080px;
  display: flex;
  flex-direction: column;
  overflow: hidden;
  background-color: #3a3a3a;
`;

const Svg = styled.svg`
  display: block;
  flex-shrink: 0;
`;

const FitBox = styled.div`
  width: ${({ $width }) => $width}px;
  flex-shrink: 0;
  padding-bottom: 1px;
  white-space: nowrap;
  text-align: left;
  ${({ $color }) => $color && `color: ${$color};`}

  > span {
    display: inline-block;
    transform-origin: 0 50%;
    white-space: pre;
  }
`;

const Cell = styled.div`
  width: ${({ $w }) => $w}px;
  flex-shrink: 0;
  display: flex;
  align-items: center;
  justify-content: center;
`;

const Spacer = styled.div`
  flex: 1;
  align-self: stretch;
  ${({ $line }) => $line && "border-right: 1px solid #2a2d38;"}
`;

const BraveWrap = styled.div`
  display: grid;
  width: ${({ $w }) => $w}px;
  height: ${({ $h }) => $h}px;

  > svg {
    grid-area: 1 / 1;
    width: ${({ $w }) => $w}px;
    height: ${({ $h }) => $h}px;
  }
`;

const TabStrip = styled.div`
  height: 45px;
  flex-shrink: 0;
  display: flex;
  padding-left: 5px;
  background-color: #212121;
  color: #f4f4f4;
  font-size: 17px;
`;

const Tab = styled.div`
  width: 198.7px;
  display: flex;
  align-items: center;
  border-right: 1px solid #4a4a4a;
  border-image: linear-gradient(#212121 22%, #4a4a4a 22%) 1;

  ${({ $active }) =>
    $active &&
    css`
      background-color: #3a3a3a;
      border: none;
      border-radius: 0 4px 0 0;
    `};
`;

const TabIcon = styled.div`
  width: 28.5px;
  padding-right: 1.5px;
  display: flex;
  justify-content: center;
`;

const TabText = styled.div`
  width: 148px;
  margin-right: 6px;
  padding-bottom: 1px;
  display: flex;
  align-items: center;
  overflow: hidden;
  mask-image: linear-gradient(to right, #000 86%, transparent);
`;

const Triangle = styled.div`
  width: 17px;
  height: 24px;
  flex-shrink: 0;
  padding-left: 3px;
  font-family: "DejaVu Sans", sans-serif;
  font-size: 14px;
  line-height: 24px;
`;

const WindowButtons = styled.div`
  flex: 1;
  display: flex;
  align-items: center;
  justify-content: space-between;
  padding: 0 16px 3px 55.5px;
`;

const NavRow = styled.div`
  height: 54px;
  flex-shrink: 0;
  display: flex;
  align-items: center;
  padding-left: 6.5px;
`;

const UrlBar = styled.div`
  width: 805.5px;
  height: 42px;
  flex-shrink: 0;
  margin: 0 5px 0 5.5px;
  padding-left: 11.5px;
  display: flex;
  align-items: center;
  border-radius: 5px;
  background-color: #212121;
`;

const Url = styled.div`
  flex: 1;
  display: flex;
  padding: 1px 0 0 10.5px;
  font-size: 20px;
  color: #fff;
`;

const UrlDivider = styled.div`
  width: 1px;
  height: 24px;
  flex-shrink: 0;
  margin-left: ${({ $left }) => $left || 0}px;
  background-color: #6a6a6a;
`;

const Shield = styled.div`
  position: relative;
  width: 17px;
  margin-left: ${({ $left }) => $left}px;

  &:last-child {
    margin-right: 8.5px;
  }
`;

const CountBadge = styled.div`
  position: absolute;
  top: -3px;
  right: -6px;
  width: 12px;
  height: 18px;
  display: flex;
  align-items: center;
  justify-content: center;
  border-radius: 50%;
  background-color: ${({ $bg }) => $bg};
  color: #fff;
  font-size: 12px;
`;

const Grammarly = styled.div`
  width: 15px;
  height: 24px;
  border-radius: 50%;
  background-color: #3cc29a;
  color: #fff;
  font-size: 16px;
  font-weight: 600;
  line-height: 23px;
  text-align: center;
`;

const BookmarkRow = styled.div`
  height: 49px;
  flex-shrink: 0;
  display: flex;
  align-items: center;
  padding-bottom: 8px;
  color: #f2f2f2;
  font-size: 17px;
`;

const Bookmark = styled.div`
  display: flex;
  align-items: center;
  margin-left: ${({ $left }) => $left}px;
`;

const BookmarkIcon = styled.div`
  width: ${({ $w }) => $w}px;
`;

const More = styled.div`
  margin-left: auto;
  padding: 0 18px 3px 0;
  font-size: 16px;
`;

const Workspace = styled.div`
  height: 872px;
  flex-shrink: 0;
  display: flex;
  background-color: #2a2c37;
  overflow: hidden;
`;

const LeftColumn = styled.div`
  width: 39px;
  height: 872px;
  margin-right: 3px;
  display: flex;
  flex-direction: column;
  background-color: #131520;
`;

const MenuCell = styled.div`
  position: relative;
  height: 46px;
  padding: 11px 0 0 12.5px;
  border-bottom: 1px solid #2a2c37;
`;

const Alerts = styled.div`
  position: absolute;
  left: 23px;
  top: 4px;
  width: 13px;
  height: 16px;
  padding-left: 3px;
  border-radius: 6.5px / 7px;
  background-color: #f8455f;
  color: #fff;
  font-size: 12px;
  font-weight: 600;
  line-height: 15px;
`;

const ToolGroup = styled.div`
  padding: 7.5px 0 7px;
  border-bottom: 1px solid ${({ $last }) => ($last ? "transparent" : "#2a2c37")};
`;

const ToolCell = styled.div`
  height: ${({ $h }) => $h}px;
  display: flex;
  align-items: center;
`;

const LayersCell = styled.div`
  margin-top: auto;
  padding: 0 0 31px 12px;
`;

const Center = styled.div`
  width: 1120px;
  display: flex;
  flex-direction: column;
`;

const TopRow = styled.div`
  height: 46px;
  margin-bottom: 1px;
  display: flex;
  background-color: #131520;
  color: #757883;
  font-size: 16px;
  font-weight: 600;
`;

const ToolbarCell = styled.div`
  width: ${({ $w }) => $w}px;
  flex-shrink: 0;
  display: flex;
  align-items: center;
  justify-content: space-evenly;
  padding: 0 1px;
  border-right: 1px solid #23262f;

  ${({ $start }) =>
    $start &&
    css`
      justify-content: flex-start;
      gap: 4.5px;
      padding: 0 0 0 ${$start}px;
    `};
`;

const IntervalButton = styled.div`
  position: relative;
  width: 25px;
  height: 42px;
  display: flex;
  align-items: center;
  justify-content: center;
  border-radius: 2px;
  background-color: #2a2d38;
`;

const Tooltip = styled.div`
  position: absolute;
  z-index: 2;
  top: 47px;
  left: -6px;
  width: 36px;
  height: 28px;
  padding: 5px 0 0 6.5px;
  border-radius: 2px;
  background-color: #50535e;
  color: #f0f0f2;
  font-size: 13.5px;
  line-height: 20px;

  &::before {
    content: "";
    position: absolute;
    top: -4px;
    left: 13px;
    border: 5px solid transparent;
    border-top: none;
    border-bottom: 4px solid #50535e;
  }
`;

const Publish = styled.div`
  width: 61px;
  display: flex;
  align-items: center;
  justify-content: center;
  background-color: #3179db;
  color: #cfdff6;
  font-size: 17px;
  border-right: 1px solid #24569b;
`;

const Play = styled.div`
  width: 28.5px;
  display: flex;
  align-items: center;
  justify-content: center;
  background-color: #3179db;
`;

const ChartArea = styled.div`
  position: relative;
  height: 727px;
  background-color: #fff;
`;

const ChartSvg = styled.svg`
  display: block;
  font-family: "Open Sans", sans-serif;
  font-size: 14px;
  font-weight: 600;
`;

const LegendBox = styled.div`
  position: absolute;
  top: 5px;
  left: 6.5px;
`;

const LegendTitle = styled.div`
  height: 28px;
  display: flex;
  align-items: center;
  color: #131722;
  font-size: 18px;
  font-weight: 500;
`;

const Ohlc = styled.div`
  display: flex;
  gap: 4.5px;
  padding: 4px 0 0 8px;
  color: #5d606b;
  font-size: 14.5px;

  b {
    font-weight: 600;
    color: ${UP};
  }
`;

const LegendRow = styled.div`
  width: ${({ $w }) => $w}px;
  height: 29px;
  display: flex;
  align-items: center;
  color: #50535e;
  font-size: 15px;
  font-weight: 600;

  ${({ $hidden }) =>
    $hidden &&
    css`
      gap: 9px;
      height: 28.5px;
      padding-left: 20.5px;
      background-color: rgba(255, 255, 255, 0.5);
      color: #b7bac2;
    `};
`;

const Chevron = styled.div`
  width: 15px;
  height: 24px;
  flex-shrink: 0;
  margin-right: 5.5px;
  display: flex;
  align-items: center;
  justify-content: center;
  border: 1px solid #d5d6e3;
  border-radius: 3px;
  background-color: #fff;
`;

const Value = styled.div`
  margin-left: ${({ $left }) => $left || 0}px;
  margin-right: ${({ $right }) => $right || 0}px;
  ${({ $color }) => $color && `color: ${$color};`}
`;

const StochBox = styled.div`
  position: absolute;
  top: 621px;
  left: 6px;
  display: flex;
  align-items: center;
  font-size: 15px;
  font-weight: 500;
`;

const StochText = styled.div`
  display: flex;
  align-items: center;
  width: 174px;
  height: 25px;
  margin-left: -4px;
  padding-left: 4px;
  background-color: rgba(255, 255, 255, 0.5);
`;

const RangeRow = styled.div`
  height: 47px;
  margin-top: 1px;
  display: flex;
  align-items: center;
  border-radius: 0 0 3px 3px;
  background-color: #131520;
  color: #757883;
  font-size: 16px;
  font-weight: 600;
`;

const RangeDivider = styled.div`
  width: 1px;
  height: 26px;
  margin-left: ${({ $left }) => $left}px;
  background-color: #2a2d38;
`;

const PanelRow = styled.div`
  height: 45px;
  margin-top: 5px;
  display: flex;
  border-radius: 3px 3px 0 0;
  background-color: #131520;
  color: #757883;
  font-size: 15.5px;
  font-weight: 600;
`;

const PanelTab = styled.div`
  width: ${({ $w }) => $w}px;
  padding: 1px 0 0 11.5px;
  display: flex;
  align-items: center;
  gap: 7px;
  border-right: 1px solid #23262f;
`;

const PanelButtons = styled.div`
  display: flex;
  align-items: center;
  gap: 13px;
  padding-right: 10px;
`;

const RightColumn = styled.div`
  width: 34px;
  height: 872px;
  margin-left: 4px;
  background-color: #131520;
  overflow: hidden;
`;

const WidgetGroup = styled.div`
  padding-bottom: 7.5px;
  border-bottom: 1px solid ${({ $last }) => ($last ? "transparent" : "#2a2c37")};

  & + & {
    padding-top: 8.5px;
  }
`;

const WidgetCell = styled.div`
  height: 61px;
  display: flex;
  align-items: center;
`;

const BetaSpace = styled.div`
  height: 14px;
`;

const TaskRow = styled.div`
  height: 60px;
  flex-shrink: 0;
  display: flex;
  background-color: #1f1f1f;
  color: #fff;
`;

const SearchBox = styled.div`
  width: 323px;
  padding: 5px 0 0 9.5px;
  display: flex;
  align-items: center;
  gap: 10px;
  border: 1px solid #bdbdbd;
  border-bottom-width: 2px;
  background-color: #f1f1f1;
  color: #333;
  font-size: 21px;

  svg {
    margin-bottom: 5px;
  }
`;

const TaskDivider = styled.div`
  width: 4px;
  height: 36px;
  margin: 12px 9.5px 0 5px;
  border-left: 1px solid #444;
  border-right: 1px solid #3a3a3a;
`;

const TaskIcon = styled.div`
  position: relative;
  width: 46.85px;
  flex-shrink: 0;
  display: flex;
  align-items: center;
  justify-content: center;
  border-bottom: 3px solid transparent;

  ${({ $active }) =>
    $active &&
    css`
      background-color: #4b4b4b;
      border-color: #76b9ed;
    `};
`;

const Illustrator = styled.div`
  width: 21px;
  height: 32px;
  padding-left: 3.5px;
  border: 2px solid #f29a1f;
  background-color: #2c1a04;
  color: #fba425;
  font-size: 18px;
  font-weight: 700;
  line-height: 27px;
`;

const Paper = styled.div`
  width: 21px;
  height: 32px;
  display: flex;
  align-items: center;
  justify-content: center;
  background: linear-gradient(#fff, #d9dbdc);
  color: #1d8cb4;
  font-size: 18px;
  font-weight: 700;
`;

const Nightly = styled.div`
  position: absolute;
  right: 12px;
  bottom: 11px;
  width: 12px;
  height: 9px;
  padding-left: 1px;
  background-color: #eee;
  color: #333;
  font-size: 7px;
  line-height: 8px;
`;

const Battery = styled.div`
  position: relative;
  width: 46px;
  height: 30px;
  margin: 15px 2.5px 0 0;
  padding-left: 5.5px;
  border: 2px solid #fff;
  background-color: #17994a;
  box-shadow: inset 0 0 0 1px #b4e0c4;
  font-size: 18px;
  line-height: 28px;

  &::after {
    content: "";
    position: absolute;
    top: 7px;
    right: -4px;
    width: 2px;
    height: 13px;
    background-color: #fff;
  }
`;

const Lang = styled.div`
  width: 31px;
  padding-left: 7px;
  display: flex;
  align-items: center;
  font-size: 17px;
`;

const Clock = styled.div`
  width: 70px;
  padding-top: 4px;
  display: flex;
  flex-direction: column;
  align-items: center;
  font-size: 17px;
  line-height: 27px;
`;

const DesktopEdge = styled.div`
  width: 6px;
  margin-left: 7.5px;
  border-left: 1px solid #8a8a8a;
`;
